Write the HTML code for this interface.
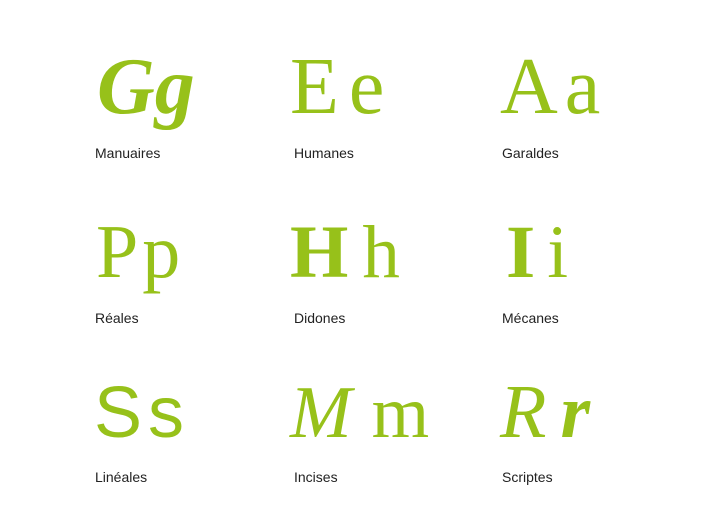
<!DOCTYPE html>
<html><head><meta charset="utf-8"><style>
body{margin:0;width:701px;height:526px;background:#fff;position:relative;overflow:hidden}
.g{position:absolute;line-height:1;color:#97c11a;font-family:"Liberation Serif",serif;white-space:nowrap}
.l{position:absolute;font-family:"Liberation Sans",sans-serif;font-size:14px;color:#222;line-height:1}
</style></head><body>
<div class="g" style="left:97px;top:47px;font-size:80px;font-weight:bold;font-style:italic;letter-spacing:0px">Gg</div>
<div class="g" style="left:290px;top:47px;font-size:80px;letter-spacing:10px">Ee</div>
<div class="g" style="left:500px;top:47px;font-size:80px;letter-spacing:7px">Aa</div>
<div class="l" style="left:95px;top:146px">Manuaires</div>
<div class="l" style="left:294px;top:146px">Humanes</div>
<div class="l" style="left:502px;top:146px">Garaldes</div>

<div class="g" style="left:96px;top:214px;font-size:76px;letter-spacing:4px">Pp</div>
<div class="g" style="left:290px;top:215px;font-size:75px;letter-spacing:14px"><b>H</b>h</div>
<div class="g" style="left:506px;top:215px;font-size:75px;letter-spacing:12px"><b>I</b>i</div>
<div class="l" style="left:95px;top:311px">Réales</div>
<div class="l" style="left:294px;top:311px">Didones</div>
<div class="l" style="left:502px;top:311px">Mécanes</div>

<div class="g" style="left:94px;top:377px;font-size:72px;font-family:'Liberation Sans',sans-serif;letter-spacing:6px">Ss</div>
<div class="g" style="left:290px;top:376px;font-size:74px;font-style:italic;letter-spacing:20px">M<span style="font-style:normal;letter-spacing:0">m</span></div>
<div class="g" style="left:500px;top:374px;font-size:76px;font-style:italic;letter-spacing:14px">R<b>r</b></div>
<div class="l" style="left:95px;top:470px">Linéales</div>
<div class="l" style="left:294px;top:470px">Incises</div>
<div class="l" style="left:502px;top:470px">Scriptes</div>
</body></html>
